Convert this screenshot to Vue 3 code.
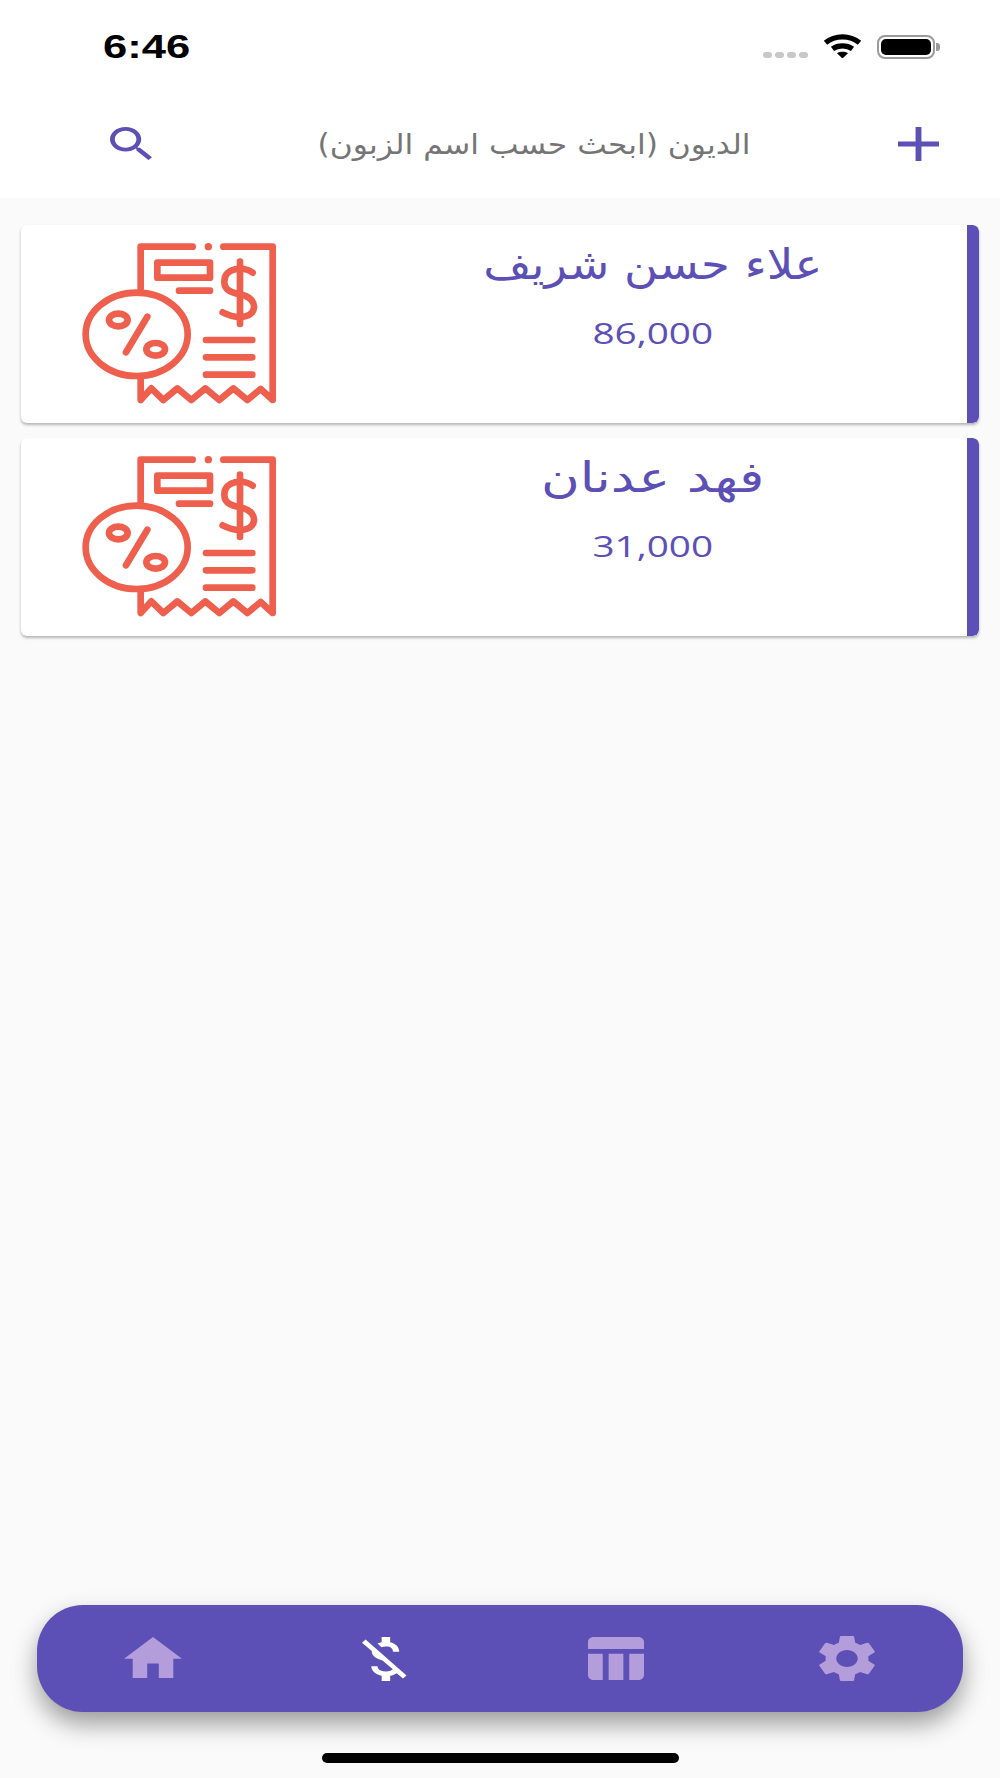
<script setup>
const debts = [
  { name: 'علاء حسن شريف', amount: '86,000', stretch: 1.11 },
  { name: 'فهد عدنان', amount: '31,000', stretch: 1.26 }
]
</script>

<template>
  <div class="page">
    <header class="top">
      <div class="status">
        <span class="time">6:46</span>
        <div class="status-icons">
          <div class="dots"><i></i><i></i><i></i><i></i></div>
          <svg class="wifi" viewBox="0 0 39 24">
            <path class="arc" d="M2.5 8.8C12 0.8 27 0.8 36.5 8.8" />
            <path class="arc" d="M9.5 14.8C15 10.8 24 10.8 29.5 14.8" />
            <path d="M14 19.2C17 17.4 22 17.4 25 19.2L19.5 24.5Z" />
          </svg>
          <div class="battery"><span></span></div>
        </div>
      </div>
      <div class="toolbar">
        <svg class="search" viewBox="3 3 17.49 17.49" preserveAspectRatio="none">
          <path d="M15.5 14h-.79l-.28-.27C15.41 12.59 16 11.11 16 9.5 16 5.91 13.09 3 9.5 3S3 5.91 3 9.5 5.91 16 9.5 16c1.61 0 3.09-.59 4.23-1.57l.27.28v.79l5 4.99L20.49 19l-4.99-5zm-6 0C7.01 14 5 11.99 5 9.5S7.01 5 9.5 5 14 7.01 14 9.5 11.99 14 9.5 14z" />
        </svg>
        <span class="title" dir="rtl">الديون (ابحث حسب اسم الزبون)</span>
        <svg class="plus" viewBox="5 5 14 14" preserveAspectRatio="none">
          <path d="M19 13h-6v6h-2v-6H5v-2h6V5h2v6h6v2z" />
        </svg>
      </div>
    </header>

    <main class="list">
      <div class="card" v-for="debt in debts" :key="debt.amount">
        <svg class="receipt" viewBox="0 0 720 570">
          <g fill="none" stroke="#ee5f4e" stroke-width="20" stroke-linecap="round" stroke-linejoin="round">
            <path d="M242 192V65H398M490 65H638V525L602 492L562 525L520 490L478 525L436 490L394 525L352 490L310 525L274 490L242 525V462" />
            <path d="M445 65h.1" stroke-width="22" />
            <rect x="292" y="113" width="158" height="45" />
            <path d="M357 197H450" />
            <path d="M540 110V297" />
            <path d="M578 143C552 124 493 126 493 170C493 205 535 205 552 211C594 224 594 275 540 276C520 276 505 271 488 262" />
            <ellipse cx="230" cy="328" rx="153" ry="125" />
            <ellipse cx="175" cy="285" rx="28" ry="19" />
            <ellipse cx="287" cy="373" rx="28" ry="19" />
            <path d="M262 275L198 382" />
            <path d="M438 345H577M438 397H577M438 449H577" />
          </g>
        </svg>
        <div class="info">
          <div class="name" dir="rtl" :style="{ transform: `scaleX(${debt.stretch})` }">{{ debt.name }}</div>
          <div class="amount">{{ debt.amount }}</div>
        </div>
        <div class="accent"></div>
      </div>
    </main>

    <nav class="tabs">
      <div class="tab">
        <svg class="ic-home" viewBox="2 3 20 17" preserveAspectRatio="none">
          <path d="M10 20v-6h4v6h5v-8h3L12 3 2 12h3v8z" />
        </svg>
      </div>
      <div class="tab active">
        <svg class="ic-money" viewBox="4.06 3 15.88 18" preserveAspectRatio="none">
          <path d="M12.5 6.9c1.78 0 2.44.85 2.5 2.1h2.21c-.07-1.72-1.12-3.3-3.21-3.81V3h-3v2.16c-.53.12-1.03.3-1.48.54l1.47 1.47c.41-.17.91-.27 1.51-.27zM5.33 4.06L4.06 5.33 7.5 8.77c0 2.08 1.56 3.21 3.91 3.91l3.51 3.51c-.34.48-1.05.91-2.42.91-2.06 0-2.87-.92-2.98-2.1h-2.2c.12 2.19 1.76 3.42 3.68 3.83V21h3v-2.15c.96-.18 1.73-.55 2.29-1.06l2.22 2.22 1.27-1.27L5.33 4.06z" />
        </svg>
      </div>
      <div class="tab">
        <svg class="ic-table" viewBox="3 3 19 18" preserveAspectRatio="none">
          <path d="M10 10.02h5V21h-5zM17 21h3c1.1 0 2-.9 2-2v-9h-5v11zm3-18H5c-1.1 0-2 .9-2 2v3h19V5c0-1.1-.9-2-2-2zM3 19c0 1.1.9 2 2 2h3V10H3v9z" />
        </svg>
      </div>
      <div class="tab">
        <svg class="ic-gear" viewBox="2.6 2 18.8 20" preserveAspectRatio="none">
          <path d="M19.14 12.94c.04-.3.06-.61.06-.94 0-.32-.02-.64-.07-.94l2.03-1.58c.18-.14.23-.41.12-.61l-1.92-3.32c-.12-.22-.37-.29-.59-.22l-2.39.96c-.5-.38-1.03-.7-1.62-.94l-.36-2.54c-.04-.24-.24-.41-.48-.41h-3.84c-.24 0-.43.17-.47.41l-.36 2.54c-.59.24-1.13.57-1.62.94l-2.39-.96c-.22-.08-.47 0-.59.22L2.74 8.87c-.12.21-.08.47.12.61l2.03 1.58c-.05.3-.09.63-.09.94s.02.64.07.94l-2.03 1.58c-.18.14-.23.41-.12.61l1.92 3.32c.12.22.37.29.59.22l2.39-.96c.5.38 1.03.7 1.62.94l.36 2.54c.05.24.24.41.48.41h3.84c.24 0 .44-.17.47-.41l.36-2.54c.59-.24 1.13-.56 1.62-.94l2.39.96c.22.08.47 0 .59-.22l1.92-3.32c.12-.22.07-.47-.12-.61l-2.01-1.58zM12 15.6c-1.98 0-3.6-1.62-3.6-3.6s1.62-3.6 3.6-3.6 3.6 1.62 3.6 3.6-1.62 3.6-3.6 3.6z" />
        </svg>
      </div>
    </nav>

    <div class="home-bar"></div>
  </div>
</template>

<style scoped>
.page {
  width: 1000px;
  height: 1778px;
  display: flex;
  flex-direction: column;
  background: #fafafa;
  overflow: hidden;
}
.top {
  height: 198px;
  background: #fff;
  flex-shrink: 0;
}
.status {
  height: 92px;
  display: flex;
  justify-content: space-between;
  padding: 28px 65px 0 103px;
  box-sizing: border-box;
}
.time {
  font-family: "Liberation Sans", sans-serif;
  font-weight: 700;
  font-size: 34px;
  line-height: 36px;
  color: #000;
  transform: scaleX(1.28);
  transform-origin: left center;
}
.status-icons {
  display: flex;
  align-items: flex-start;
  padding-top: 6px;
}
.dots {
  display: flex;
  gap: 3px;
  margin-top: 18px;
  margin-right: 15px;
}
.dots i {
  width: 9px;
  height: 6px;
  border-radius: 3px;
  background: #c8c8c8;
}
.wifi {
  width: 39px;
  height: 24px;
  fill: #000;
  margin-right: 15px;
}
.wifi .arc {
  fill: none;
  stroke: #000;
  stroke-width: 5.2;
}
.battery {
  position: relative;
  width: 58px;
  height: 24px;
  margin-top: 1px;
  border: 2px solid #9a9a9a;
  border-radius: 8px;
  box-sizing: border-box;
  padding: 2px;
}
.battery span {
  display: block;
  height: 100%;
  background: #000;
  border-radius: 5px;
}
.battery::after {
  content: "";
  position: absolute;
  right: -7px;
  top: 6px;
  width: 4px;
  height: 8px;
  background: #9a9a9a;
  border-radius: 0 3px 3px 0;
}
.toolbar {
  display: flex;
  align-items: flex-start;
  padding: 35px 61px 0 110px;
}
.search {
  width: 42px;
  height: 33px;
  fill: #5c4fb5;
}
.title {
  width: 430px;
  margin-left: 167px;
  text-align: center;
  white-space: nowrap;
  font-family: "DejaVu Sans", sans-serif;
  font-size: 28px;
  line-height: 36px;
  color: #757575;
  transform: scaleX(1.12);
}
.plus {
  width: 41px;
  height: 34px;
  margin-left: auto;
  fill: #5c4fb5;
}
.list {
  flex: 1;
  display: flex;
  flex-direction: column;
  gap: 15px;
  padding: 27px 21px 0;
}
.card {
  display: flex;
  height: 198px;
  background: #fff;
  border-radius: 6px;
  box-shadow: 0 2px 3px rgba(0, 0, 0, 0.28);
  overflow: hidden;
}
.receipt {
  width: 240px;
  height: 190px;
  margin-left: 39px;
  flex-shrink: 0;
}
.info {
  flex: 1;
  margin-left: 39px;
  display: flex;
  flex-direction: column;
  align-items: center;
  color: #5c4fb5;
}
.name {
  margin-top: 10px;
  font-family: "DejaVu Sans", sans-serif;
  font-size: 42px;
  line-height: 60px;
  white-space: nowrap;
}
.amount {
  margin-top: 18px;
  font-family: "Open Sans", sans-serif;
  font-size: 30px;
  line-height: 40px;
  transform: scaleX(1.29);
}
.accent {
  width: 12px;
  flex-shrink: 0;
  background: #5c4fb5;
  border-radius: 0 6px 6px 0;
}
.tabs {
  flex-shrink: 0;
  height: 107px;
  margin: 0 37px;
  display: grid;
  grid-template-columns: repeat(4, 1fr);
  background: #5c4fb5;
  border-radius: 46px;
  box-shadow: 0 12px 24px rgba(0, 0, 0, 0.38);
}
.tab {
  display: flex;
  justify-content: center;
  padding-top: 31px;
  fill: #b39ddb;
}
.tab.active {
  fill: #fff;
}
.ic-home {
  width: 58px;
  height: 41px;
  margin-top: 1px;
}
.ic-money {
  width: 45px;
  height: 44px;
  margin-top: 1px;
}
.ic-table {
  width: 56px;
  height: 43px;
  margin-top: 1px;
}
.ic-gear {
  width: 56px;
  height: 47px;
  margin-top: -1px;
}
.home-bar {
  flex-shrink: 0;
  width: 357px;
  height: 10px;
  margin: 41px auto 15px;
  background: #000;
  border-radius: 5px;
}
</style>
